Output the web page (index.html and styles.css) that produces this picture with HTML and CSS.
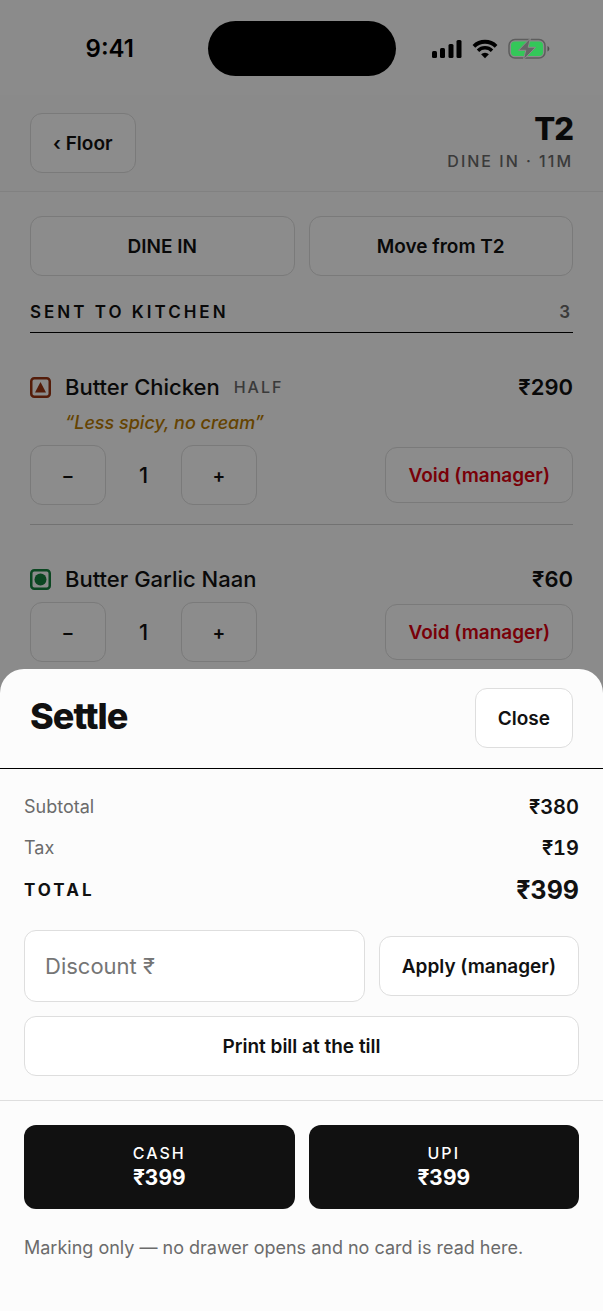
FILE: index.html
```html
<!DOCTYPE html>
<html lang="en">
<head>
<meta charset="utf-8">
<meta name="viewport" content="width=device-width, initial-scale=1">
<title>T2 – Settle</title>
<link rel="stylesheet" href="styles.css">
</head>
<body>
<div class="app">
  <div class="statusbar">
    <time class="clock">9:41</time>
    <div class="island"></div>
    <div class="indicators">
      <svg width="30" height="20" viewBox="0 0 30 20" aria-label="Signal">
        <rect x="0" y="12" width="5" height="7" rx="1.5"/>
        <rect x="8" y="9" width="5" height="10" rx="1.5"/>
        <rect x="16.500" y="5" width="5" height="14" rx="1.5"/>
        <rect x="24.500" y="1" width="5" height="18" rx="1.5"/>
      </svg>
      <svg width="26" height="20" viewBox="0 0 26 20" aria-label="Wi-Fi">
        <path d="M1.900 7.300a15.800 15.800 0 0 1 22.200 0" fill="none" stroke="#000" stroke-width="3.800"/>
        <path d="M6 11.700a10 10 0 0 1 14 0" fill="none" stroke="#000" stroke-width="3.500"/>
        <path d="M13 19.300l-3.900-4a5.600 5.600 0 0 1 7.800 0z"/>
      </svg>
      <svg width="42" height="22" viewBox="0 0 42 22" aria-label="Battery charging">
        <rect x="1" y="1.500" width="36" height="18.500" rx="6" fill="none" stroke="#5d5d5d" stroke-width="1.500"/>
        <rect x="3" y="3.500" width="32" height="14.500" rx="4" fill="#34c759"/>
        <path d="M39.500 8c2.500 1 2.500 4.500 0 5.500z" fill="#4d4d4d"/>
        <path d="M22.500 0L10.500 12.300h7.300L15.300 22L27.500 9.300h-7.300z" fill="#666" stroke="#8b8b8b" stroke-width="1"/>
      </svg>
    </div>
  </div>

  <header class="topbar">
    <button class="btn" type="button">‹ Floor</button>
    <div class="table-info">
      <h1 class="table-name">T2</h1>
      <p class="table-meta">DINE IN · 11M</p>
    </div>
  </header>

  <main class="order">
    <div class="pair">
      <button class="btn" type="button">DINE IN</button>
      <button class="btn" type="button">Move from T2</button>
    </div>
    <div class="section-head">
      <h2 class="section-title">SENT TO KITCHEN</h2>
      <span class="section-count">3</span>
    </div>
    <ul class="items">
      <li class="item">
        <div class="item-line">
          <svg class="diet" viewBox="0 0 21 21" aria-label="Non-veg"><rect x="1.250" y="1.250" width="18.500" height="18.500" rx="3" fill="none" stroke="#9a3412" stroke-width="2.500"/><path d="M10.500 5l5.500 10.500h-11z" fill="#9a3412"/></svg>
          <span class="item-name">Butter Chicken</span>
          <span class="item-variant">HALF</span>
          <span class="item-price">₹290</span>
        </div>
        <p class="item-note">“Less spicy, no cream”</p>
        <div class="item-actions">
          <button class="btn step" type="button" aria-label="Decrease">−</button>
          <span class="qty">1</span>
          <button class="btn step" type="button" aria-label="Increase">+</button>
          <button class="btn void" type="button">Void (manager)</button>
        </div>
      </li>
      <li class="item">
        <div class="item-line">
          <svg class="diet" viewBox="0 0 21 21" aria-label="Veg"><rect x="1.250" y="1.250" width="18.500" height="18.500" rx="3" fill="none" stroke="#15803d" stroke-width="2.500"/><circle cx="10.500" cy="10.500" r="6" fill="#15803d"/></svg>
          <span class="item-name">Butter Garlic Naan</span>
          <span class="item-price">₹60</span>
        </div>
        <div class="item-actions">
          <button class="btn step" type="button" aria-label="Decrease">−</button>
          <span class="qty">1</span>
          <button class="btn step" type="button" aria-label="Increase">+</button>
          <button class="btn void" type="button">Void (manager)</button>
        </div>
      </li>
    </ul>
  </main>

  <div class="scrim"></div>

  <section class="sheet" role="dialog" aria-labelledby="settle-title">
    <header class="sheet-head">
      <h2 class="sheet-title" id="settle-title">Settle</h2>
      <button class="btn" type="button">Close</button>
    </header>
    <div class="sheet-body">
      <dl class="totals">
        <div class="total-row"><dt>Subtotal</dt><dd>₹380</dd></div>
        <div class="total-row"><dt>Tax</dt><dd>₹19</dd></div>
        <div class="total-row grand"><dt>TOTAL</dt><dd>₹399</dd></div>
      </dl>
      <form class="discount">
        <input class="discount-input" type="text" inputmode="decimal" placeholder="Discount ₹" aria-label="Discount ₹">
        <button class="btn" type="button">Apply (manager)</button>
      </form>
      <button class="btn" type="button">Print bill at the till</button>
    </div>
    <footer class="sheet-foot">
      <div class="pair">
        <button class="pay" type="button"><span class="pay-label">CASH</span><span class="pay-amount">₹399</span></button>
        <button class="pay" type="button"><span class="pay-label">UPI</span><span class="pay-amount">₹399</span></button>
      </div>
      <p class="hint">Marking only — no drawer opens and no card is read here.</p>
    </footer>
  </section>
</div>
</body>
</html>
```

FILE: styles.css
```css
* { box-sizing: border-box; }

body {
  margin: 0;
  font-family: Inter, "Liberation Sans", sans-serif;
  font-size: 19px;
  color: #111;
  background: #fdfdfd;
}

h1, h2, p, ul, dl, dd { margin: 0; padding: 0; }
ul { list-style: none; }
button, input { font: inherit; color: inherit; }

.app {
  position: relative;
  height: 100vh;
  overflow: hidden;
}

.statusbar {
  position: relative;
  z-index: 2;
  display: grid;
  grid-template-columns: 1fr 188px 1fr;
  align-items: center;
  height: 95px;
  padding-top: 2px;
  color: #000;
}
.clock { justify-self: center; padding-left: 12px; font-size: 24px; font-weight: 600; }
.island { height: 55px; border-radius: 28px; background: #000; }
.indicators { display: flex; align-items: center; gap: 10px; padding-left: 36px; }

.btn {
  height: 60px;
  padding: 0 22px;
  border: 1px solid #dedede;
  border-radius: 12px;
  background: #fff;
  font-weight: 600;
  white-space: nowrap;
}

.topbar {
  display: flex;
  align-items: center;
  justify-content: space-between;
  padding: 18px 30px;
  border-bottom: 1px solid #ececec;
  background: #fbfbfb;
}
.table-info { display: grid; gap: 4px; text-align: right; }
.table-name { font-size: 31px; line-height: 32px; font-weight: 800; letter-spacing: -1px; }
.table-meta { font-size: 16px; line-height: 24px; font-weight: 500; letter-spacing: 2px; color: #6b6b6b; }

.order { padding: 24px 30px; }
.pair { display: grid; grid-template-columns: 1fr 1fr; gap: 14px; }

.section-head {
  display: flex;
  align-items: center;
  justify-content: space-between;
  padding: 24px 0 7px;
  border-bottom: 1px solid #000;
}
.section-title { font-size: 17px; line-height: 25px; font-weight: 600; letter-spacing: 3px; }
.section-count { font-size: 17px; line-height: 25px; font-weight: 600; color: #6b6b6b; letter-spacing: 3px; }

.item { display: grid; gap: 9px; padding: 41px 0 19px; border-bottom: 1px solid #d0d0d0; }
.item-line { display: flex; align-items: center; gap: 14px; line-height: 27px; font-size: 22px; font-weight: 500; }
.diet { width: 21px; height: 21px; }
.item-variant { font-size: 16px; letter-spacing: 2px; color: #6b6b6b; }
.item-price { margin-left: auto; font-weight: 600; }
.item-note { padding-left: 35px; line-height: 26px; font-size: 18px; font-weight: 500; font-style: italic; color: #b87a00; }
.item-actions { display: flex; align-items: center; }
.step { width: 76px; }
.qty { width: 75px; text-align: center; font-size: 22px; font-weight: 500; }
.void { height: 56px; margin-left: auto; color: #dc0010; }

.scrim { position: absolute; inset: 0; z-index: 1; background: rgba(0, 0, 0, 0.45); }

.sheet {
  position: absolute;
  left: 0;
  right: 0;
  bottom: 0;
  z-index: 3;
  border-radius: 24px 24px 0 0;
  background: #fcfcfc;
}
.sheet-head {
  display: flex;
  align-items: flex-start;
  justify-content: space-between;
  padding: 19px 30px 20px;
  border-bottom: 1px solid #000;
}
.sheet-title { font-size: 36px; line-height: 56px; font-weight: 800; letter-spacing: -1px; }
.sheet-body {
  display: grid;
  grid-template-columns: minmax(0, 1fr);
  gap: 14px;
  padding: 24px;
  border-bottom: 1px solid #dedede;
}

.totals { display: grid; gap: 13px; padding-bottom: 11px; font-variant-numeric: tabular-nums; }
.total-row { display: flex; align-items: center; justify-content: space-between; line-height: 28px; }
.total-row dt { font-size: 18px; color: #6b6b6b; }
.total-row dd { font-size: 20px; font-weight: 600; }
.total-row.grand { line-height: 30px; }
.total-row.grand dt { font-size: 17px; font-weight: 700; letter-spacing: 3px; color: #111; }
.total-row.grand dd { font-size: 25px; font-weight: 700; }

.discount { display: flex; align-items: center; gap: 14px; }
.discount-input {
  flex: 1;
  min-width: 0;
  height: 72px;
  padding: 0 20px;
  border: 1px solid #dedede;
  border-radius: 12px;
  background: #fff;
  font-size: 22px;
}
.discount-input::placeholder { color: #757575; opacity: 1; }

.sheet-foot { padding: 24px 24px 50px; }
.pay {
  display: grid;
  align-content: center;
  justify-items: center;
  height: 84px;
  padding: 0 0 2px;
  border: 0;
  border-radius: 12px;
  background: #111;
  color: #fff;
}
.pay-label { font-size: 16px; line-height: 24px; font-weight: 500; letter-spacing: 2px; }
.pay-amount { font-size: 21px; line-height: 26px; font-weight: 700; font-variant-numeric: tabular-nums; }
.hint { padding-top: 26px; font-size: 18px; line-height: 26px; color: #6b6b6b; }
```
